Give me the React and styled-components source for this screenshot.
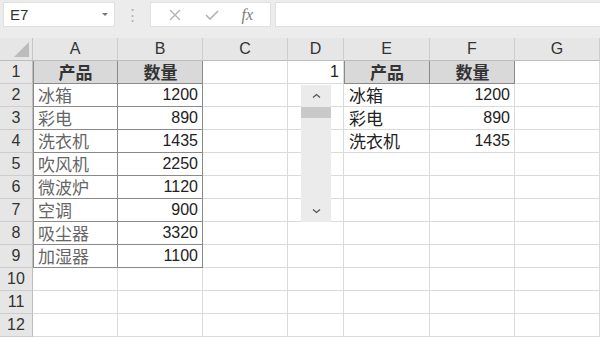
import React from 'react'
import styled, { createGlobalStyle } from 'styled-components'

const Global = createGlobalStyle`
  html, body { margin: 0; padding: 0; background: #ececec; }
  body { font-family: "Liberation Sans", "Noto Sans CJK SC", sans-serif; overflow: hidden; }
`

const COLS = ['A', 'B', 'C', 'D', 'E', 'F', 'G']
const WIDTHS = '33px 85px 85px 85px 56px 86px 85px 85px'

const rows = [
  ['产品', '数量', '', '1', '产品', '数量', ''],
  ['冰箱', '1200', '', '', '冰箱', '1200', ''],
  ['彩电', '890', '', '', '彩电', '890', ''],
  ['洗衣机', '1435', '', '', '洗衣机', '1435', ''],
  ['吹风机', '2250', '', '', '', '', ''],
  ['微波炉', '1120', '', '', '', '', ''],
  ['空调', '900', '', '', '', '', ''],
  ['吸尘器', '3320', '', '', '', '', ''],
  ['加湿器', '1100', '', '', '', '', ''],
  ['', '', '', '', '', '', ''],
  ['', '', '', '', '', '', ''],
  ['', '', '', '', '', '', ''],
]

const Page = styled.div`
  width: 600px;
  height: 337px;
  display: flex;
  flex-direction: column;
  position: relative;
`

const Toolbar = styled.div`
  height: 38px;
  display: flex;
  align-items: flex-start;
  padding-top: 2px;
  box-sizing: border-box;
`

const NameBox = styled.div`
  width: 112px;
  height: 25px;
  margin-left: 3px;
  background: #fff;
  border: 1px solid #e0e0e0;
  box-sizing: border-box;
  display: flex;
  align-items: center;
  justify-content: space-between;
  padding: 0 6px;
  font-size: 15px;
  color: #333;
`

const Caret = styled.span`
  width: 0;
  height: 0;
  border-left: 3px solid transparent;
  border-right: 3px solid transparent;
  border-top: 3px solid #777;
`

const Grip = styled.div`
  width: 35px;
  height: 25px;
  display: flex;
  align-items: center;
  justify-content: center;
  color: #b0b0b0;
  font-size: 15px;
`

const FuncBox = styled.div`
  width: 121px;
  height: 25px;
  background: #fff;
  border: 1px solid #e0e0e0;
  box-sizing: border-box;
  display: flex;
  align-items: center;
  justify-content: space-around;
  padding: 0 6px;
`

const Fx = styled.span`
  font-family: "Liberation Serif", serif;
  font-style: italic;
  font-size: 16px;
  color: #7a7a7a;
`

const FormulaBar = styled.div`
  flex: 1;
  height: 25px;
  margin-left: 4px;
  background: #fff;
  border: 1px solid #e0e0e0;
  border-right: none;
  box-sizing: border-box;
`

const Grid = styled.div`
  display: grid;
  grid-template-columns: ${WIDTHS};
  grid-auto-rows: 23px;
  background: #fff;
`

const Corner = styled.div`
  background: #e6e6e6;
  border-right: 1px solid #c6c6c6;
  border-bottom: 1px solid #bdbdbd;
  position: relative;
  &::after {
    content: '';
    position: absolute;
    right: 3px;
    bottom: 3px;
    border-left: 15px solid transparent;
    border-bottom: 15px solid #bcbcbc;
  }
`

const ColHead = styled.div`
  background: #e6e6e6;
  border-right: 1px solid #cdcdcd;
  border-bottom: 1px solid #bdbdbd;
  display: flex;
  align-items: center;
  justify-content: center;
  font-size: 16px;
  color: #333;
`

const RowHead = styled.div`
  background: #e6e6e6;
  border-right: 1px solid #bdbdbd;
  border-bottom: 1px solid #cdcdcd;
  display: flex;
  align-items: center;
  justify-content: center;
  font-size: 16px;
  color: #333;
`

const Cell = styled.div`
  box-sizing: border-box;
  background: ${p => (p.$fill ? '#d9d9d9' : '#fff')};
  border-right: 1px solid ${p => (p.$boxR ? '#8a8a8a' : '#dadada')};
  border-bottom: 1px solid ${p => (p.$boxB ? '#8a8a8a' : '#dadada')};
  box-shadow: ${p => (p.$boxL ? 'inset 1px 0 0 #8a8a8a' : 'none')};
  display: flex;
  align-items: center;
  justify-content: ${p => p.$align};
  padding: 0 4px 1px 5px;
  font-size: ${p => (p.$cjk ? '17px' : '16px')};
  font-weight: ${p => (p.$bold ? 600 : 400)};
  color: ${p => p.$color};
  white-space: nowrap;
  overflow: hidden;
`

const Spinner = styled.div`
  position: absolute;
  left: 301px;
  top: 85px;
  width: 30px;
  height: 137px;
  background: #ebebeb;
  display: flex;
  flex-direction: column;
`

const Arrow = styled.div`
  height: 22px;
  display: flex;
  align-items: center;
  justify-content: center;
`

const Thumb = styled.div`
  height: 11px;
  background: #c9c9c9;
`

const Track = styled.div`
  flex: 1;
`

const Chev = ({ down }) => (
  <svg width="9" height="6" viewBox="0 0 9 6">
    <path d={down ? 'M1 1.5 L4.5 4.5 L8 1.5' : 'M1 4.5 L4.5 1.5 L8 4.5'} fill="none" stroke="#555" strokeWidth="1.3" />
  </svg>
)

function cellProps(r, c, v) {
  const inLeft = c <= 1 && r <= 8
  const inRight = (c === 4 || c === 5) && r === 0
  const numeric = /^\d+$/.test(v)
  const p = {
    $align: numeric ? 'flex-end' : 'flex-start',
    $color: '#222',
    $cjk: v && !numeric,
    $fill: r === 0 && (c <= 1 || c === 4 || c === 5),
  }
  if (r === 0 && v && !numeric) {
    p.$align = 'center'
    p.$bold = true
    p.$color = '#333'
  }
  if (inLeft || inRight) {
    p.$boxR = true
    p.$boxB = true
    p.$boxL = c === 0 || c === 4
  }
  if (inLeft && c === 0 && r > 0) p.$color = '#666'
  return p
}

export default function App() {
  return (
    <Page>
      <Global />
      <Toolbar>
        <NameBox>
          <span>E7</span>
          <Caret />
        </NameBox>
        <Grip>⋮</Grip>
        <FuncBox>
          <svg width="14" height="14" viewBox="0 0 14 14">
            <path d="M2 2 L12 12 M12 2 L2 12" stroke="#b3b3b3" strokeWidth="1.4" />
          </svg>
          <svg width="16" height="14" viewBox="0 0 16 14">
            <path d="M2 7 L6 11 L14 3" fill="none" stroke="#b3b3b3" strokeWidth="1.6" />
          </svg>
          <Fx>fx</Fx>
        </FuncBox>
        <FormulaBar />
      </Toolbar>
      <Grid>
        <Corner />
        {COLS.map(c => (
          <ColHead key={c}>{c}</ColHead>
        ))}
        {rows.map((row, r) => (
          <React.Fragment key={r}>
            <RowHead>{r + 1}</RowHead>
            {row.map((v, c) => (
              <Cell key={c} {...cellProps(r, c, v)}>
                {v}
              </Cell>
            ))}
          </React.Fragment>
        ))}
      </Grid>
      <Spinner>
        <Arrow><Chev /></Arrow>
        <Thumb />
        <Track />
        <Arrow><Chev down /></Arrow>
      </Spinner>
    </Page>
  )
}
